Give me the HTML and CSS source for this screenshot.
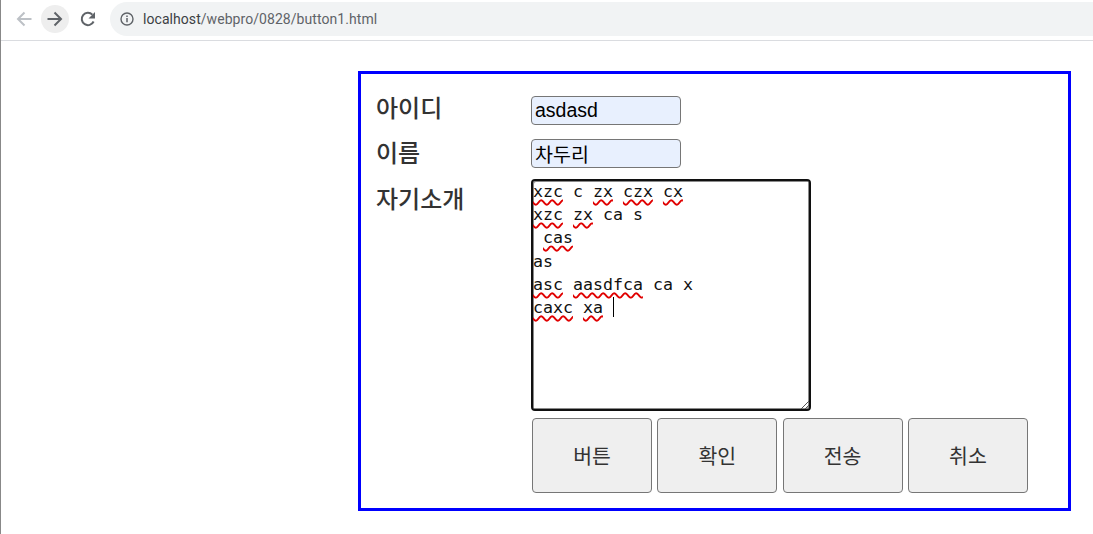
FILE: index.html
```html
<!DOCTYPE html>
<html lang="ko">
<head>
<meta charset="utf-8">
<title>button1</title>
<link rel="stylesheet" href="styles.css">
</head>
<body>
<header class="toolbar">
  <svg class="nav-icon" width="16" height="16" viewBox="0 0 16 16"><path d="M15.5 8H2M8.5 1.5 2 8l6.5 6.5" fill="none" stroke="#bdc1c6" stroke-width="2"/></svg>
  <span class="nav-round"><svg width="16" height="16" viewBox="0 0 16 16"><path d="M.5 8H14M7.5 1.5 14 8l-6.500 6.500" fill="none" stroke="#5f6368" stroke-width="2"/></svg></span>
  <svg class="nav-icon reload" width="16" height="16" viewBox="0 0 16 16"><path d="M13.600 10.500A6.200 6.200 0 1 1 12.400 3.600" fill="none" stroke="#5f6368" stroke-width="2"/><path d="M15 1v6.500H8.500z" fill="#5f6368"/></svg>
  <div class="address">
    <svg width="14" height="14" viewBox="0 0 14 14"><circle cx="7" cy="7" r="6" fill="none" stroke="#5f6368" stroke-width="1.400"/><path d="M7 6v4.200M7 3.600V5" stroke="#5f6368" stroke-width="1.500"/></svg>
    <span class="url"><span class="host">localhost</span>/webpro/0828/button1.html</span>
  </div>
</header>
<main class="panel">
  <form class="form">
    <label class="label label-id">아이디</label>
    <input class="field" value="asdasd">
    <label class="label label-name">이름</label>
    <input class="field field-name" value="차두리">
    <label class="label label-bio">자기소개</label>
    <div class="bio">
      <div class="memo"><u>xzc</u> c <u>zx</u> <u>czx</u> <u>cx</u>
<u>xzc</u> <u>zx</u> ca s
 <u>cas</u>
as
<u>asc</u> <u>aasdfca</u> ca x
<u>caxc</u> <u>xa</u> <i class="caret"></i></div>
      <svg class="grip" width="8" height="8" viewBox="0 0 8 8"><path d="M8 0 0 8M8 4 4 8" stroke="#555" stroke-width="1"/></svg>
    </div>
    <div class="buttons">
      <button type="button" class="btn">버튼</button>
      <button type="button" class="btn">확인</button>
      <button type="button" class="btn">전송</button>
      <button type="button" class="btn">취소</button>
    </div>
  </form>
</main>
</body>
</html>
```
FILE: styles.css
```css
* { box-sizing: border-box; }
html, body { margin: 0; padding: 0; height: 100%; overflow: hidden; background: #fff; }
body {
  font-family: "Liberation Sans", "Noto Sans CJK KR", sans-serif;
  border-left: 1px solid #888;
}
.toolbar {
  height: 41px;
  display: flex;
  align-items: center;
  padding: 0 0 3px 15px;
  border-bottom: 1px solid #dadce0;
}
.nav-icon { flex: none; }
.nav-round {
  flex: none;
  width: 28px;
  height: 28px;
  margin-left: 9px;
  border-radius: 50%;
  background: #eeeeee;
  display: flex;
  align-items: center;
  justify-content: center;
}
.reload { margin-left: 11px; }
.address {
  flex: 1;
  height: 34px;
  margin-left: 14px;
  padding-left: 10px;
  border-radius: 17px 0 0 17px;
  background: #f1f3f4;
  display: flex;
  align-items: center;
  gap: 9px;
}
.url { font: 14px "Roboto", "Liberation Sans", sans-serif; color: #5f6368; letter-spacing: 0.06px; }
.host { color: #3c4043; }
.panel {
  width: 713px;
  height: 440px;
  margin: 30px 0 0 357px;
  border: 3px solid #0000ff;
  padding: 22px 0 0 15px;
}
.form {
  display: grid;
  grid-template-columns: 155px 1fr;
  grid-template-rows: 29px 43px 243px 82px;
}
.label {
  font: 500 24px/24px "Noto Sans CJK KR", sans-serif;
  color: #333;
}
.label-id { margin-top: -1px; }
.label-name { margin-top: 15px; }
.label-bio { margin-top: 18px; }
.field {
  width: 150px;
  height: 29px;
  padding: 0 3px;
  border: 1px solid #767676;
  border-radius: 4px;
  background: #e8f0fe;
  color: #000;
  font: 19.5px "Liberation Sans", "Noto Sans CJK KR", sans-serif;
}
.field-name { margin-top: 14px; }
.bio {
  position: relative;
  width: 280px;
  height: 232px;
  margin-top: 11px;
  border: 2px solid #101010;
  border-radius: 4px;
  box-shadow: inset 1px 1px 0 #8a8a8a, inset -1px -1px 0 #8a8a8a;
  overflow: hidden;
}
.memo {
  margin-top: -1px;
  white-space: pre;
  font: 16.6px/23.2px "DejaVu Sans Mono", monospace;
  color: #111;
}
.memo u { text-decoration: underline wavy #e00000 2px; text-underline-offset: 2px; }
.caret {
  display: inline-block;
  width: 1px;
  height: 20px;
  background: #000;
  vertical-align: -4px;
}
.grip { position: absolute; right: 0; bottom: 0; }
.buttons {
  grid-column: 2;
  display: flex;
  gap: 5.3px;
  margin-top: 7px;
  margin-left: 1px;
}
.btn {
  flex: none;
  width: 120px;
  height: 75px;
  padding: 0 0 2px;
  border: 1px solid #767676;
  border-radius: 4px;
  background: #efefef;
  color: #333;
  font: 20.5px "Liberation Sans", "Noto Sans CJK KR", sans-serif;
}
```
